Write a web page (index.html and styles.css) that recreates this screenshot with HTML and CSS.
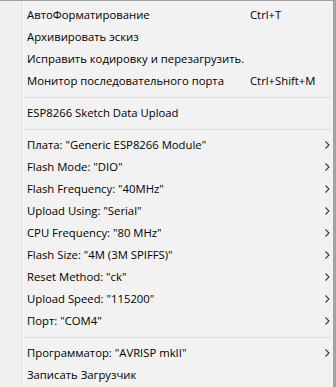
FILE: index.html
```html
<!DOCTYPE html>
<html lang="ru">
<head>
<meta charset="utf-8">
<title>Menu</title>
<link rel="stylesheet" href="styles.css">
</head>
<body>
<div class="menu">
  <div class="item"><span class="label">АвтоФорматирование</span><span class="key">Ctrl+T</span></div>
  <div class="item"><span class="label">Архивировать эскиз</span></div>
  <div class="item"><span class="label">Исправить кодировку и перезагрузить.</span></div>
  <div class="item"><span class="label">Монитор последовательного порта</span><span class="key">Ctrl+Shift+M</span></div>
  <div class="sep"></div>
  <div class="item"><span class="label">ESP8266 Sketch Data Upload</span></div>
  <div class="sep"></div>
  <div class="item"><span class="label">Плата: "Generic ESP8266 Module"</span><svg class="arrow" width="5" height="8" viewBox="0 0 5 8"><polyline points="0.5,0.5 4,4 0.5,7.5" fill="none" stroke="#3a3a3a" stroke-width="1.1"/></svg></div>
  <div class="item"><span class="label">Flash Mode: "DIO"</span><svg class="arrow" width="5" height="8" viewBox="0 0 5 8"><polyline points="0.5,0.5 4,4 0.5,7.5" fill="none" stroke="#3a3a3a" stroke-width="1.1"/></svg></div>
  <div class="item"><span class="label">Flash Frequency: "40MHz"</span><svg class="arrow" width="5" height="8" viewBox="0 0 5 8"><polyline points="0.5,0.5 4,4 0.5,7.5" fill="none" stroke="#3a3a3a" stroke-width="1.1"/></svg></div>
  <div class="item"><span class="label">Upload Using: "Serial"</span><svg class="arrow" width="5" height="8" viewBox="0 0 5 8"><polyline points="0.5,0.5 4,4 0.5,7.5" fill="none" stroke="#3a3a3a" stroke-width="1.1"/></svg></div>
  <div class="item"><span class="label">CPU Frequency: "80 MHz"</span><svg class="arrow" width="5" height="8" viewBox="0 0 5 8"><polyline points="0.5,0.5 4,4 0.5,7.5" fill="none" stroke="#3a3a3a" stroke-width="1.1"/></svg></div>
  <div class="item"><span class="label">Flash Size: "4M (3M SPIFFS)"</span><svg class="arrow" width="5" height="8" viewBox="0 0 5 8"><polyline points="0.5,0.5 4,4 0.5,7.5" fill="none" stroke="#3a3a3a" stroke-width="1.1"/></svg></div>
  <div class="item"><span class="label">Reset Method: "ck"</span><svg class="arrow" width="5" height="8" viewBox="0 0 5 8"><polyline points="0.5,0.5 4,4 0.5,7.5" fill="none" stroke="#3a3a3a" stroke-width="1.1"/></svg></div>
  <div class="item"><span class="label">Upload Speed: "115200"</span><svg class="arrow" width="5" height="8" viewBox="0 0 5 8"><polyline points="0.5,0.5 4,4 0.5,7.5" fill="none" stroke="#3a3a3a" stroke-width="1.1"/></svg></div>
  <div class="item"><span class="label">Порт: "COM4"</span><svg class="arrow" width="5" height="8" viewBox="0 0 5 8"><polyline points="0.5,0.5 4,4 0.5,7.5" fill="none" stroke="#3a3a3a" stroke-width="1.1"/></svg></div>
  <div class="sep"></div>
  <div class="item"><span class="label">Программатор: "AVRISP mkII"</span><svg class="arrow" width="5" height="8" viewBox="0 0 5 8"><polyline points="0.5,0.5 4,4 0.5,7.5" fill="none" stroke="#3a3a3a" stroke-width="1.1"/></svg></div>
  <div class="item"><span class="label">Записать Загрузчик</span></div>
</div>
</body>
</html>
```

FILE: styles.css
```css
html, body {
  margin: 0;
  padding: 0;
  background: #f2f2f2;
}

.menu {
  box-sizing: border-box;
  width: 336px;
  height: 387px;
  overflow: hidden;
  border-top: 1px solid #a0a0a0;
  border-right: 3px solid #a3a3a3;
  padding-top: 3px;
  background: linear-gradient(to right, #f0f0f0 0, #f0f0f0 22px, #e6e6e6 22px, #e6e6e6 23px, #fdfdfd 23px, #fdfdfd 24px, #f2f2f2 24px);
  font-family: "Open Sans", "Noto Sans", sans-serif;
  font-size: 11.3px;
  color: #000;
  display: flex;
  flex-direction: column;
}

.item {
  height: 22px;
  flex: none;
  display: flex;
  align-items: center;
  padding-left: 27px;
  padding-right: 3px;
  white-space: nowrap;
  line-height: 14px;
  padding-bottom: 1px;
  box-sizing: border-box;
}

.label {
  width: 223px;
  flex: none;
}

.key {
  flex: none;
}

.arrow {
  margin-left: auto;
  flex: none;
}

.sep {
  height: 10px;
  flex: none;
  display: flex;
  align-items: center;
  padding-left: 24px;
  padding-right: 2px;
}

.sep::after {
  content: "";
  flex: 1;
  height: 1px;
  background: #d7d7d7;
}
```
